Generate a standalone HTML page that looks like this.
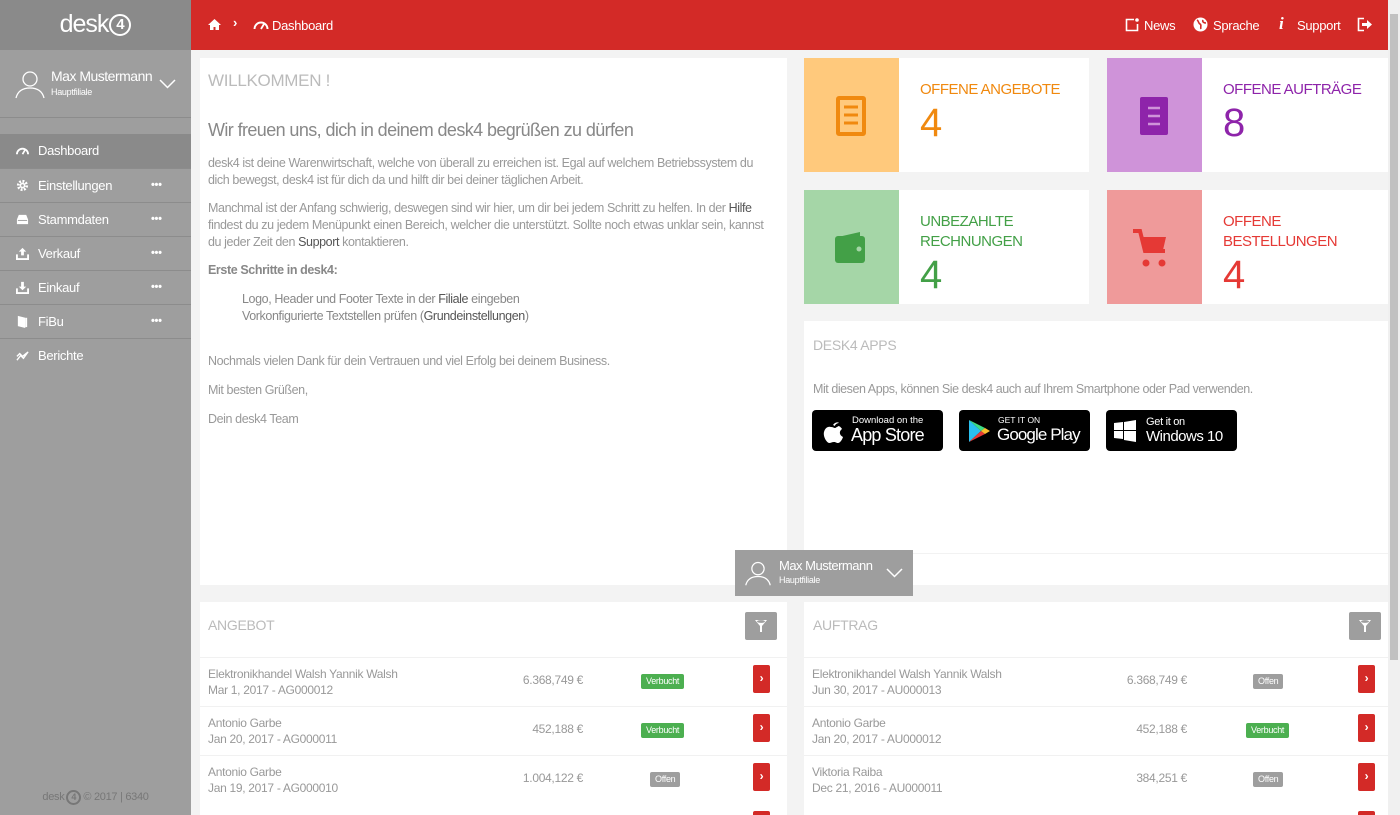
<!DOCTYPE html>
<html style="overflow:hidden"><head><meta charset="utf-8"><style>
*{box-sizing:border-box;margin:0;padding:0}
html,body{width:1400px;height:815px;overflow:hidden}
body{background:#f3f3f3;font-family:"Liberation Sans",sans-serif;color:#999;position:relative;letter-spacing:-0.3px}
.a{position:absolute}
.sb{left:0;top:0;width:191px;height:815px;background:#9e9e9e}
.logo{left:0;top:0;width:191px;height:50px;background:#8a8a8a;color:#fff;font-size:25px;text-align:center;line-height:48px;letter-spacing:-1px}
.c4{display:inline-block;width:22px;height:22px;border:2px solid #fff;border-radius:50%;font-size:15px;line-height:18px;font-weight:bold;vertical-align:3px;margin-left:1px;letter-spacing:0}
.nav{left:0;width:191px;height:34px;border-top:1px solid #8c8c8c;color:#fff;font-size:13px;line-height:33px;padding-left:38px}
.nav .ic{position:absolute;left:16px;top:10px;width:13px;height:13px}
.dots{position:absolute;left:151px;top:0;font-size:11px;font-weight:bold}
.hd{left:191px;top:0;width:1197px;height:50px;background:#d32a27;color:#fff;font-size:13px}
.card{background:#fff}
p{font-size:12.5px;line-height:17px;color:#999;letter-spacing:-0.4px}
b.k{color:#555;font-weight:normal}
.tile{height:114px;background:#fff}
.tile .i{position:absolute;left:0;top:0;width:95px;height:114px}
.tile .t{position:absolute;left:116px;top:22px;font-size:15px;line-height:20px;letter-spacing:-0.5px}
.tile .n{font-size:40px;line-height:42px;margin-top:2px}
.row{position:absolute;left:0;width:587px;height:49px;border-top:1px solid #f1f1f1}
.row .nm{position:absolute;left:8px;top:8px;font-size:12px;color:#999;line-height:16px}
.row .pr{position:absolute;right:204px;top:15px;font-size:12px}
.bd{position:absolute;top:16px;height:15px;border-radius:2px;color:#fff;font-size:9px;line-height:15px;padding:0 5px}
.g{background:#4caf50}.o{background:#9e9e9e}
.go{position:absolute;top:7px;width:17px;height:28px;background:#d32a27;border-radius:2px;color:#fff;font-size:12px;text-align:center;line-height:27px;font-weight:bold}
.badge{position:absolute;top:410px;height:41px;background:#000;border-radius:4px;color:#fff;font-family:"Liberation Sans",sans-serif}
</style></head><body>
<div class="a sb"></div>
<div class="a logo">desk<span class="c4">4</span></div>
<svg class="a" style="left:14px;top:68px" width="32" height="32" viewBox="0 0 32 32" fill="none" stroke="#fff" stroke-width="1.3"><circle cx="16" cy="11" r="7"/><path d="M2 30c2-8 8-10 14-10s12 2 14 10"/></svg>
<div class="a" style="left:51px;top:68px;color:#fff;font-size:14px;letter-spacing:-0.5px">Max Mustermann</div>
<div class="a" style="left:51px;top:87px;color:#fff;font-size:9px">Hauptfiliale</div>
<svg class="a" style="left:159px;top:79px" width="17" height="10"><path d="M1 1l7.5 7.5L16 1" stroke="#fff" stroke-width="1.5" fill="none"/></svg>
<div class="a" style="left:0;top:117px;width:191px;border-top:1px solid #8c8c8c"></div>
<div class="a nav" style="top:134px;background:#8a8a8a;border:none">Dashboard<svg class="ic" viewBox="0 0 14 14"><path d="M1 11a6 6 0 0 1 12 0" stroke="#fff" stroke-width="2" fill="none"/><path d="M7 11l3-5" stroke="#fff" stroke-width="1.8"/></svg></div>
<div class="a nav" style="top:168px">Einstellungen<svg class="ic" viewBox="0 0 14 14"><circle cx="7" cy="7" r="4.5" fill="none" stroke="#fff" stroke-width="3" stroke-dasharray="2 1.5"/><circle cx="7" cy="7" r="3" fill="#fff"/><circle cx="7" cy="7" r="1.4" fill="#9e9e9e"/></svg><span class="dots">•••</span></div>
<div class="a nav" style="top:202px">Stammdaten<svg class="ic" viewBox="0 0 14 14"><path d="M1 7l2-5h8l2 5v5H1z" fill="#fff"/><path d="M2 8h10" stroke="#9e9e9e"/></svg><span class="dots">•••</span></div>
<div class="a nav" style="top:236px">Verkauf<svg class="ic" viewBox="0 0 14 14"><path d="M1 8v5h12V8" stroke="#fff" stroke-width="2" fill="none"/><path d="M7 1l4 4H8.5v4h-3V5H3z" fill="#fff"/></svg><span class="dots">•••</span></div>
<div class="a nav" style="top:270px">Einkauf<svg class="ic" viewBox="0 0 14 14"><path d="M1 8v5h12V8" stroke="#fff" stroke-width="2" fill="none"/><path d="M7 10l4-4H8.5V1h-3v5H3z" fill="#fff"/></svg><span class="dots">•••</span></div>
<div class="a nav" style="top:304px">FiBu<svg class="ic" viewBox="0 0 14 14"><path d="M2 1l8 2v11l-8-2z" fill="#fff"/><path d="M10 3h2v10h-2" fill="#fff"/></svg><span class="dots">•••</span></div>
<div class="a nav" style="top:338px;border-bottom:none">Berichte<svg class="ic" viewBox="0 0 14 14" fill="none" stroke="#fff" stroke-width="1.5"><path d="M1 12l4-5 3 3 5-7M1 8l3-3 3 3 5-4"/></svg></div>
<div class="a" style="left:0;top:790px;width:191px;text-align:center;font-size:11px;color:#777">desk<span style="display:inline-block;width:15px;height:15px;border:2px solid #777;border-radius:50%;font-size:9px;line-height:11px;font-weight:bold;margin:0 2px;letter-spacing:0">4</span>© 2017 | 6340</div>

<div class="a hd">
<svg class="a" style="left:17px;top:18px" width="13" height="13" viewBox="0 0 13 13"><path d="M6.5 1L0 7h2v5h3.5V9h2v3H11V7h2z" fill="#fff"/></svg>
<div class="a" style="left:42px;top:15px;font-weight:bold">›</div>
<svg class="a" style="left:62px;top:19px" width="16" height="11"><path d="M1.5 10a6.5 6.5 0 0 1 13 0" stroke="#fff" stroke-width="2" fill="none"/><path d="M8 10l3-5" stroke="#fff" stroke-width="1.8"/></svg>
<div class="a" style="left:81px;top:18px">Dashboard</div>
<svg class="a" style="left:934px;top:18px" width="14" height="14"><path d="M9 1.5H1.5v11h11V6" stroke="#fff" stroke-width="1.6" fill="none"/><circle cx="12" cy="2" r="1.8" fill="#fff"/></svg>
<div class="a" style="left:953px;top:18px">News</div>
<svg class="a" style="left:1002px;top:17px" width="15" height="15"><circle cx="7.5" cy="7.5" r="7" fill="#fff"/><path d="M4 3c2 1 1 3 3 4s0 3 1 5M10 3c-1 2 1 3 3 3" stroke="#d32a27" stroke-width="1.6" fill="none"/></svg>
<div class="a" style="left:1022px;top:18px">Sprache</div>
<div class="a" style="left:1088px;top:14px;font-style:italic;font-weight:bold;font-size:17px;font-family:'Liberation Serif',serif">i</div>
<div class="a" style="left:1106px;top:18px">Support</div>
<svg class="a" style="left:1166px;top:17px" width="16" height="15"><path d="M7 1.5H1.5v12H7" stroke="#fff" stroke-width="1.6" fill="none"/><path d="M5 6h5V3l5 4.5-5 4.5V9H5z" fill="#fff"/></svg>
</div>
<div class="a" style="left:1388px;top:0;width:12px;height:815px;background:#f0f0f0"></div>
<div class="a" style="left:1390px;top:14px;width:8px;height:646px;background:#c1c1c1"></div>

<div class="a card" style="left:200px;top:58px;width:587px;height:527px">
<div class="a" style="left:8px;top:13px;font-size:17px;color:#bbb">WILLKOMMEN !</div>
<div class="a" style="left:8px;top:62px;font-size:18px;color:#888;letter-spacing:-0.6px">Wir freuen uns, dich in deinem desk4 begrüßen zu dürfen</div>
<p class="a" style="left:8px;top:97px;width:566px">desk4 ist deine Warenwirtschaft, welche von überall zu erreichen ist. Egal auf welchem Betriebssystem du dich bewegst, desk4 ist für dich da und hilft dir bei deiner täglichen Arbeit.</p>
<p class="a" style="left:8px;top:142px;width:566px">Manchmal ist der Anfang schwierig, deswegen sind wir hier, um dir bei jedem Schritt zu helfen. In der <b class="k">Hilfe</b> findest du zu jedem Menüpunkt einen Bereich, welcher die unterstützt. Sollte noch etwas unklar sein, kannst du jeder Zeit den <b class="k">Support</b> kontaktieren.</p>
<p class="a" style="left:8px;top:204px;font-weight:bold;color:#888">Erste Schritte in desk4:</p>
<p class="a" style="left:42px;top:233px;color:#888">Logo, Header und Footer Texte in der <b class="k">Filiale</b> eingeben<br>Vorkonfigurierte Textstellen prüfen (<b class="k">Grundeinstellungen</b>)</p>
<p class="a" style="left:8px;top:295px">Nochmals vielen Dank für dein Vertrauen und viel Erfolg bei deinem Business.</p>
<p class="a" style="left:8px;top:324px">Mit besten Grüßen,</p>
<p class="a" style="left:8px;top:353px">Dein desk4 Team</p>
</div>

<div class="a tile" style="left:804px;top:58px;width:285px"><div class="i" style="background:#ffc97c"><svg class="a" style="left:32px;top:38px" width="30" height="40"><rect x="2" y="2" width="26" height="36" stroke="#f0890f" stroke-width="4" fill="none" rx="1"/><path d="M8 11h14M8 19h14M8 27h14" stroke="#f0890f" stroke-width="3"/></svg></div><div class="t" style="color:#f0890f">OFFENE ANGEBOTE<div class="n">4</div></div></div>
<div class="a tile" style="left:1107px;top:58px;width:281px"><div class="i" style="background:#cf93d9"><svg class="a" style="left:32px;top:38px" width="30" height="40"><rect x="1" y="1" width="28" height="38" fill="#8e24aa" rx="2"/><path d="M9 12h12M9 20h12M9 28h12" stroke="#cf93d9" stroke-width="2.5"/></svg></div><div class="t" style="color:#8e24aa">OFFENE AUFTRÄGE<div class="n">8</div></div></div>
<div class="a tile" style="left:804px;top:190px;width:285px"><div class="i" style="background:#a5d6a7"><svg class="a" style="left:30px;top:40px" width="32" height="35"><path d="M4 7L26 2v6z" fill="#43a047"/><rect x="1" y="6" width="30" height="27" rx="3" fill="#43a047"/><circle cx="25" cy="19" r="2.5" fill="#a5d6a7"/></svg></div><div class="t" style="color:#43a047">UNBEZAHLTE<br>RECHNUNGEN<div class="n">4</div></div></div>
<div class="a tile" style="left:1107px;top:190px;width:281px"><div class="i" style="background:#ef9a9a"><svg class="a" style="left:25px;top:38px" width="40" height="40"><path d="M1 3h7l5 20h20" stroke="#e53935" stroke-width="4" fill="none"/><path d="M9 9h25l-3 13H12z" fill="#e53935"/><circle cx="14" cy="35" r="3.5" fill="#e53935"/><circle cx="30" cy="35" r="3.5" fill="#e53935"/></svg></div><div class="t" style="color:#e53935">OFFENE<br>BESTELLUNGEN<div class="n">4</div></div></div>

<div class="a card" style="left:804px;top:321px;width:584px;height:264px">
<div class="a" style="left:9px;top:16px;font-size:14px;color:#bbb">DESK4 APPS</div>
<p class="a" style="left:9px;top:60px;color:#999;letter-spacing:-0.45px">Mit diesen Apps, können Sie desk4 auch auf Ihrem Smartphone oder Pad verwenden.</p>
<div class="a" style="left:0;top:232px;width:584px;border-top:1px solid #f2f2f2"></div>
</div>
<div class="badge" style="left:812px;width:131px"><svg class="a" style="left:9px;top:8px" width="24" height="27" viewBox="0 0 24 27"><path d="M12 7c2-3 5-3 6-2-1 0-4 1-4 3M16 8c2 0 4 1 5 3-3 2-3 6 1 8-1 3-3 6-5 6s-2-1-4-1-3 1-5 1c-3-1-6-7-5-11 1-4 4-6 7-5 2 0 3 1 4 1s2-2 6-2z" fill="#fff"/></svg><div class="a" style="left:40px;top:5px;font-size:9.5px;letter-spacing:0">Download on the</div><div class="a" style="left:39px;top:15px;font-size:18px;letter-spacing:-.8px">App Store</div></div>
<div class="badge" style="left:959px;width:131px"><svg class="a" style="left:8px;top:9px" width="24" height="24" viewBox="0 0 24 24"><path d="M2 1l12 11L2 23z" fill="#2ac0f0"/><path d="M2 1l16 8-4 3z" fill="#3ddc84"/><path d="M2 23l16-8-4-3z" fill="#e53935"/><path d="M18 9l5 3-5 3-4-3z" fill="#fbc02d"/></svg><div class="a" style="left:39px;top:5px;font-size:8.5px;letter-spacing:0">GET IT ON</div><div class="a" style="left:38px;top:15px;font-size:17px;letter-spacing:-.9px">Google Play</div></div>
<div class="badge" style="left:1106px;width:131px"><svg class="a" style="left:8px;top:10px" width="22" height="22"><path d="M0 3l9-1v8H0zM10 2l12-2v10H10zM0 11h9v8l-9-1zM10 11h12v11l-12-2z" fill="#fff"/></svg><div class="a" style="left:40px;top:6px;font-size:11px">Get it on</div><div class="a" style="left:40px;top:18px;font-size:15px;letter-spacing:-.5px">Windows 10</div></div>

<div class="a card" style="left:200px;top:602px;width:587px;height:213px;overflow:hidden">
<div class="a" style="left:8px;top:15px;font-size:14px;color:#bbb">ANGEBOT</div>
<div class="a" style="left:545px;top:10px;width:32px;height:28px;background:#9e9e9e;border-radius:2px"><svg class="a" style="left:9px;top:7px" width="14" height="14"><path d="M1 1h12L8 7v6H6V7z" fill="#fff"/><ellipse cx="7" cy="2.5" rx="4" ry="1.4" fill="#9e9e9e"/></svg></div>
<div class="row" style="top:55px"><div class="nm">Elektronikhandel Walsh Yannik Walsh<br>Mar 1, 2017 - AG000012</div><div class="pr">6.368,749 €</div><div class="bd g" style="left:441px">Verbucht</div><div class="go" style="left:553px">›</div></div>
<div class="row" style="top:104px"><div class="nm">Antonio Garbe<br>Jan 20, 2017 - AG000011</div><div class="pr">452,188 €</div><div class="bd g" style="left:441px">Verbucht</div><div class="go" style="left:553px">›</div></div>
<div class="row" style="top:153px"><div class="nm">Antonio Garbe<br>Jan 19, 2017 - AG000010</div><div class="pr">1.004,122 €</div><div class="bd o" style="left:450px">Offen</div><div class="go" style="left:553px">›</div></div>
<div class="go" style="left:553px;top:209px"></div>
</div>
<div class="a card" style="left:804px;top:602px;width:584px;height:213px;overflow:hidden">
<div class="a" style="left:9px;top:15px;font-size:14px;color:#bbb">AUFTRAG</div>
<div class="a" style="left:545px;top:10px;width:32px;height:28px;background:#9e9e9e;border-radius:2px"><svg class="a" style="left:9px;top:7px" width="14" height="14"><path d="M1 1h12L8 7v6H6V7z" fill="#fff"/><ellipse cx="7" cy="2.5" rx="4" ry="1.4" fill="#9e9e9e"/></svg></div>
<div class="row" style="top:55px;width:584px"><div class="nm">Elektronikhandel Walsh Yannik Walsh<br>Jun 30, 2017 - AU000013</div><div class="pr" style="right:201px">6.368,749 €</div><div class="bd o" style="left:449px">Offen</div><div class="go" style="left:554px">›</div></div>
<div class="row" style="top:104px;width:584px"><div class="nm">Antonio Garbe<br>Jan 20, 2017 - AU000012</div><div class="pr" style="right:201px">452,188 €</div><div class="bd g" style="left:442px">Verbucht</div><div class="go" style="left:554px">›</div></div>
<div class="row" style="top:153px;width:584px"><div class="nm">Viktoria Raiba<br>Dec 21, 2016 - AU000011</div><div class="pr" style="right:201px">384,251 €</div><div class="bd o" style="left:449px">Offen</div><div class="go" style="left:554px">›</div></div>
<div class="go" style="left:554px;top:209px"></div>
</div>

<div class="a" style="left:735px;top:550px;width:178px;height:46px;background:#9e9e9e">
<svg class="a" style="left:9px;top:9px" width="28" height="28" viewBox="0 0 32 32" fill="none" stroke="#fff" stroke-width="1.4"><circle cx="16" cy="11" r="7"/><path d="M2 30c2-8 8-10 14-10s12 2 14 10"/></svg>
<div class="a" style="left:44px;top:8px;color:#fff;font-size:13px;letter-spacing:-0.5px">Max Mustermann</div>
<div class="a" style="left:44px;top:25px;color:#fff;font-size:9px">Hauptfiliale</div>
<svg class="a" style="left:151px;top:18px" width="17" height="10"><path d="M1 1l7.5 7.5L16 1" stroke="#fff" stroke-width="1.5" fill="none"/></svg>
</div>
</body></html>
